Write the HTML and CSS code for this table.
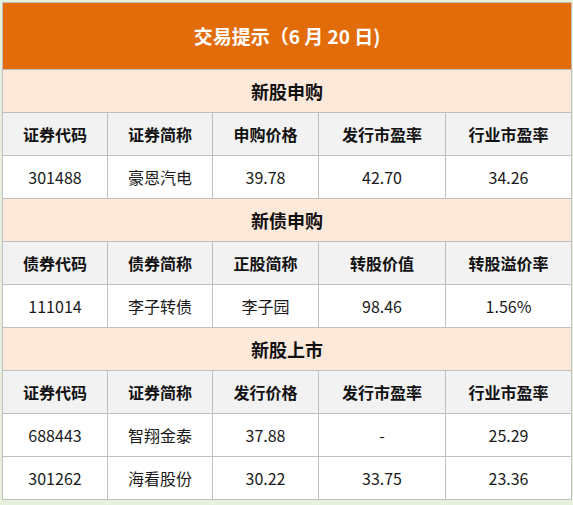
FILE: index.html
```html
<!DOCTYPE html>
<html lang="zh">
<head>
<meta charset="utf-8">
<link rel="stylesheet" href="styles.css">
</head>
<body>
<table class="tips">
  <colgroup>
    <col class="c1"><col class="c2"><col class="c3"><col class="c4"><col class="c5">
  </colgroup>
  <tr class="title"><td colspan="5">交易提示（6 月 20 日)</td></tr>
  <tr class="section"><td colspan="5">新股申购</td></tr>
  <tr class="head"><td>证券代码</td><td>证券简称</td><td>申购价格</td><td>发行市盈率</td><td>行业市盈率</td></tr>
  <tr class="row"><td>301488</td><td>豪恩汽电</td><td>39.78</td><td>42.70</td><td>34.26</td></tr>
  <tr class="section"><td colspan="5">新债申购</td></tr>
  <tr class="head"><td>债券代码</td><td>债券简称</td><td>正股简称</td><td>转股价值</td><td>转股溢价率</td></tr>
  <tr class="row"><td>111014</td><td>李子转债</td><td>李子园</td><td>98.46</td><td>1.56%</td></tr>
  <tr class="section"><td colspan="5">新股上市</td></tr>
  <tr class="head"><td>证券代码</td><td>证券简称</td><td>发行价格</td><td>发行市盈率</td><td>行业市盈率</td></tr>
  <tr class="row"><td>688443</td><td>智翔金泰</td><td>37.88</td><td>-</td><td>25.29</td></tr>
  <tr class="row"><td>301262</td><td>海看股份</td><td>30.22</td><td>33.75</td><td>23.36</td></tr>
</table>
</body>
</html>
```
FILE: styles.css
```css
html, body {
  margin: 0;
  padding: 0;
  background: #e6f0dc;
}
body {
  padding: 2px 0 0 2px;
  font-family: "Noto Sans CJK SC", "Noto Sans", sans-serif;
  color: #1a1a1a;
}
.tips {
  border-collapse: collapse;
  table-layout: fixed;
  width: 569px;
  background: #ffffff;
}
.c1 { width: 105px; }
.c2 { width: 105px; }
.c3 { width: 106px; }
.c4 { width: 127px; }
.c5 { width: 126px; }
.tips td {
  border: 1px solid #bfbfbf;
  text-align: center;
  vertical-align: middle;
  padding: 0;
  font-size: 16px;
  line-height: 20px;
}
.title td {
  height: 66px;
  background: #e36c0a;
  color: #ffffff;
  font-size: 19px;
  font-weight: bold;
}
.section td {
  height: 42px;
  background: #fde9d9;
  font-size: 18px;
  font-weight: bold;
  color: #111;
}
.head td {
  height: 42px;
  background: #f2f2f2;
  font-weight: bold;
  color: #111;
}
.row td {
  height: 42px;
  background: #ffffff;
}
```
